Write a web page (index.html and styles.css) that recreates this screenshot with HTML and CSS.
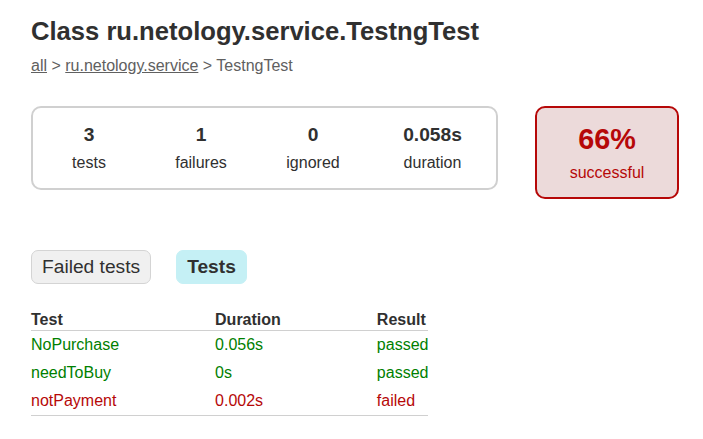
FILE: index.html
```html
<!DOCTYPE html>
<html>
<head>
<meta charset="utf-8">
<title>Test results - Class ru.netology.service.TestngTest</title>
<link rel="stylesheet" href="styles.css">
</head>
<body>
<div class="content">
  <h1 class="title">Class ru.netology.service.TestngTest</h1>
  <div class="breadcrumbs">
    <a href="#">all</a> &gt; <a href="#">ru.netology.service</a> &gt; TestngTest
  </div>
  <div class="summary">
    <div class="summary-group">
      <div class="info-box">
        <div class="counter">3</div>
        <p class="label">tests</p>
      </div>
      <div class="info-box">
        <div class="counter">1</div>
        <p class="label">failures</p>
      </div>
      <div class="info-box">
        <div class="counter">0</div>
        <p class="label">ignored</p>
      </div>
      <div class="info-box info-box-duration">
        <div class="counter">0.058s</div>
        <p class="label">duration</p>
      </div>
    </div>
    <div class="info-box success-rate failures">
      <div class="percent">66%</div>
      <p class="label">successful</p>
    </div>
  </div>
  <ul class="tab-links">
    <li class="tab-link"><a href="#">Failed tests</a></li>
    <li class="tab-link selected"><a href="#">Tests</a></li>
  </ul>
  <div class="tab">
    <table class="results">
      <thead>
        <tr>
          <th>Test</th>
          <th>Duration</th>
          <th>Result</th>
        </tr>
      </thead>
      <tbody>
        <tr>
          <td class="success">NoPurchase</td>
          <td class="success">0.056s</td>
          <td class="success">passed</td>
        </tr>
        <tr>
          <td class="success">needToBuy</td>
          <td class="success">0s</td>
          <td class="success">passed</td>
        </tr>
        <tr>
          <td class="failures">notPayment</td>
          <td class="failures">0.002s</td>
          <td class="failures">failed</td>
        </tr>
      </tbody>
    </table>
  </div>
</div>
</body>
</html>
```

FILE: styles.css
```css
html, body {
  margin: 0;
  padding: 0;
  background: #ffffff;
}

body {
  font-family: "Liberation Sans", Arial, sans-serif;
  font-size: 16px;
  color: #303030;
}

a, a:visited {
  color: #303030;
}

.content {
  padding: 17px 31px 30px 31px;
}

.title {
  font-size: 25.6px;
  font-weight: bold;
  margin: 0 0 11px 0;
}

.breadcrumbs,
.breadcrumbs a {
  color: #606060;
}

.summary {
  display: flex;
  align-items: flex-start;
  margin-top: 31px;
  margin-bottom: 41px;
}

.summary-group {
  display: flex;
  flex-shrink: 0;
  border: solid 2px #d0d0d0;
  border-radius: 10px;
  padding: 1px 0;
}

.info-box {
  width: 110px;
  flex-shrink: 0;
  padding: 15px 1px;
  text-align: center;
}

.info-box-duration {
  width: 125px;
}

.label {
  margin: 0;
}

.counter,
.percent {
  font-size: 19.2px;
  font-weight: bold;
  margin-bottom: 8px;
}

.success-rate {
  width: 140px;
  margin-left: 37px;
  border: solid 2px #d0d0d0;
  border-radius: 10px;
  padding: 15px 0;
}

.success-rate .percent {
  font-size: 28.8px;
}

.success-rate.failures {
  background-color: #ecdada;
  border-color: #b60808;
  color: #b60808;
}

.tab-links {
  display: flex;
  list-style: none;
  margin: 0 0 16px 0;
  padding: 10px 0;
}

.tab-link {
  padding: 5px 10px;
  margin-right: 25px;
  border: solid 1px #d4d4d4;
  border-radius: 7px;
  background-color: #f0f0f0;
}

.tab-link a {
  font-size: 19.2px;
  text-decoration: none;
  display: block;
}

.tab-link.selected {
  background-color: #c5f0f5;
  border-color: #c5f0f5;
}

.tab-link.selected a {
  font-weight: bold;
}

.results {
  border-collapse: collapse;
  min-width: 350px;
  border-bottom: solid #d0d0d0 1px;
}

.results th {
  text-align: left;
  white-space: nowrap;
  padding: 1px 0 1px 96px;
  border-bottom: solid #d0d0d0 1px;
}

.results td {
  white-space: nowrap;
  padding: 5px 0 5px 96px;
}

.results th:first-child,
.results td:first-child {
  padding-left: 0;
}

.success {
  color: #008000;
}

.failures {
  color: #b60808;
}
```
